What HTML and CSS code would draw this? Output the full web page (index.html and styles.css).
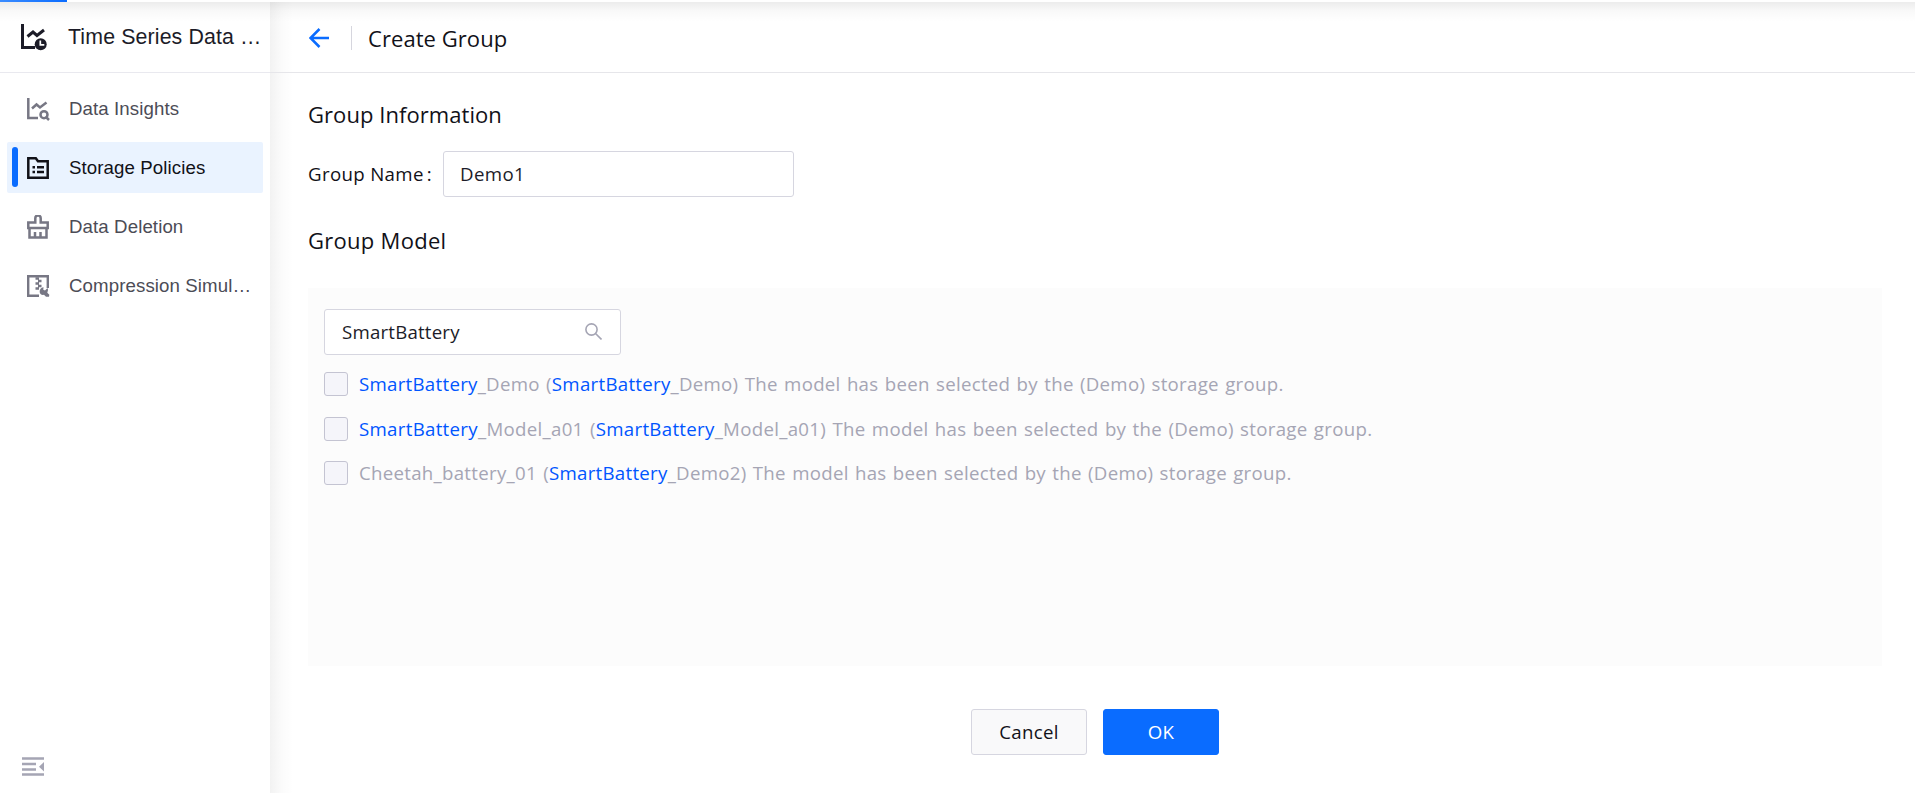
FILE: index.html
```html
<!DOCTYPE html>
<html lang="en">
<head>
<meta charset="utf-8">
<title>Create Group</title>
<link rel="stylesheet" href="styles.css">
</head>
<body>
<div class="progress"><div class="progress-value"></div></div>
<div class="app">
  <aside class="sidebar">
    <div class="brand">
      <svg class="brand-icon" viewBox="0 0 28 28"><path d="M3.500 1v23.500H16" fill="none" stroke="#1c1c28" stroke-width="3"/><path d="M8.500 13.500l5.500-4.500 4 3.500 7-5.500" fill="none" stroke="#1c1c28" stroke-width="3"/><circle cx="21.700" cy="21.200" r="6" fill="#1c1c28"/><path d="M21.300 17.500v4.300h4" fill="none" stroke="#fff" stroke-width="1.700"/></svg>
      <span class="brand-name">Time Series Data …</span>
    </div>
    <nav class="nav">
      <a class="nav-item"><svg class="nav-icon" viewBox="0 0 24 24"><path d="M2.300 1v20H12" fill="none" stroke="currentColor" stroke-width="2.500"/><path d="M6 11.500l4.500-4 3.500 3 6.500-5" fill="none" stroke="currentColor" stroke-width="2.500"/><circle cx="18" cy="17.700" r="3.500" fill="none" stroke="currentColor" stroke-width="2.500"/><path d="M19.500 19.500l3.500 3.500" stroke="currentColor" stroke-width="2.500"/></svg><span>Data Insights</span></a>
      <a class="nav-item active"><svg class="nav-icon" viewBox="0 0 24 24"><path d="M2.300 2.300h7.500l2.200 3h9.700v16.400H2.300z" fill="none" stroke="currentColor" stroke-width="2.500"/><path d="M6.500 11.300H9M11 11.300h7M6.500 16H9M11 16h7" stroke="currentColor" stroke-width="2.400"/></svg><span>Storage Policies</span></a>
      <a class="nav-item"><svg class="nav-icon" viewBox="0 0 24 24"><path d="M9.300 7.500V3.300a2.700 2.700 0 0 1 5.400 0v4.200h7v5.500H2.300V7.500zM3.500 13v9.500h17V13M9 22v-5M14.500 22v-5" fill="none" stroke="currentColor" stroke-width="2.500"/></svg><span>Data Deletion</span></a>
      <a class="nav-item"><svg class="nav-icon" viewBox="0 0 24 24"><path d="M13 21.800H2.200V2.200h19.600V14" fill="none" stroke="currentColor" stroke-width="2.400"/><path d="M9.500 4.500h3.500M12 7h3.500M9.500 9.500h3.500M12 12h3.500M9.500 14.500h3.500" stroke="currentColor" stroke-width="2.500"/><path d="M17.500 13.200a4.300 4.300 0 0 0-3 6.800q1.500 1.300 3.500.8l2 2h3l.3-2-2-2a4.500 4.500 0 0 0 .2-4.800l-2.500 2.500-1.700-.8z" fill="currentColor"/></svg><span>Compression Simul…</span></a>
    </nav>
    <svg class="collapse" viewBox="0 0 22 19"><path d="M0 1.500h22M0 7h14M0 12.500h14M0 17.500h22" stroke="#a5a5b4" stroke-width="2.700"/><path d="M22 5v9.500l-5-4.700z" fill="#a5a5b4"/></svg>
  </aside>
  <main class="main">
    <header class="header">
      <svg class="back" viewBox="0 0 20 20"><path d="M20 10H1.500M10.500 1L1.500 10l9 9" fill="none" stroke="#0a6cff" stroke-width="2.500"/></svg>
      <span class="divider"></span>
      <h1 class="title">Create Group</h1>
    </header>
    <section class="content">
      <h2 class="heading">Group Information</h2>
      <div class="field"><label class="label" for="name">Group Name<span class="colon">:</span></label><input class="input" id="name" value="Demo1"></div>
      <h2 class="heading model-heading">Group Model</h2>
      <div class="panel">
        <div class="search"><span>SmartBattery</span><svg class="search-icon" viewBox="0 0 17 17"><circle cx="6.500" cy="6.500" r="5.600" fill="none" stroke="#a5a5b4" stroke-width="1.600"/><path d="M10.500 10.500l6 6" stroke="#a5a5b4" stroke-width="1.600"/></svg></div>
        <label class="option"><span class="check"></span><span class="option-text"><b>SmartBattery</b>_Demo (<b>SmartBattery</b>_Demo) The model has been selected by the (Demo) storage group.</span></label>
        <label class="option"><span class="check"></span><span class="option-text wide"><b>SmartBattery</b>_Model_a01 (<b>SmartBattery</b>_Model_a01) The model has been selected by the (Demo) storage group.</span></label>
        <label class="option"><span class="check"></span><span class="option-text">Cheetah_battery_01 (<b>SmartBattery</b>_Demo2) The model has been selected by the (Demo) storage group.</span></label>
      </div>
      <div class="actions"><button class="btn">Cancel</button><button class="btn primary">OK</button></div>
    </section>
  </main>
</div>
</body>
</html>
```
FILE: styles.css
```css
* { box-sizing: border-box; }
body { margin: 0; height: 793px; overflow: hidden; background: #fff; color: #111118; font-family: "Open Sans", "Noto Sans", sans-serif; font-size: 18.67px; letter-spacing: .27px; }
.progress { height: 2px; background: #fff; }
.progress-value { width: 67px; height: 2px; background: linear-gradient(90deg, #3b8cff, #0a6cff); }
.app { position: relative; display: flex; height: 791px; }
.app::before { content: ""; position: absolute; inset: 0 0 auto; height: 20px; background: linear-gradient(rgba(0,0,0,.075), rgba(0,0,0,.025) 45%, transparent); z-index: 2; }
.sidebar { width: 270px; flex: none; display: flex; flex-direction: column; font-family: "Liberation Sans", Arial, sans-serif; letter-spacing: .1px; background: #fff; }
.brand { display: flex; align-items: center; height: 71px; padding-left: 19px; border-bottom: 1px solid #e9e9ef; }
.brand-icon { width: 28px; height: 28px; margin-right: 21px; }
.brand-name { font-size: 21.33px; color: #1c1c28; white-space: nowrap; line-height: 30px; letter-spacing: .13px; }
.nav { display: flex; flex-direction: column; gap: 8px; padding: 10px 7px 0; }
.nav-item { display: flex; align-items: center; height: 51px; padding-left: 19px; border-radius: 2px; color: #4c4c56; white-space: nowrap; }
.nav-item.active { position: relative; background: #eaf3ff; color: #111118; }
.nav-item.active::before { content: ""; position: absolute; left: 5px; top: 5px; width: 6px; height: 40px; border-radius: 3px; background: #0a6cff; }
.nav-icon { width: 24px; height: 24px; margin-right: 19px; color: #777784; }
.active .nav-icon { color: #111118; }
.collapse { width: 22px; height: 19px; margin: auto 0 17px 22px; }
.main { flex: 1; min-width: 0; background: linear-gradient(90deg, rgba(0,0,0,.05), rgba(0,0,0,.015) 12px, transparent 23px); }
.header { display: flex; align-items: center; height: 71px; padding: 1px 0 0 39px; border-bottom: 1px solid #e6e6ea; }
.back { width: 20px; height: 20px; }
.divider { width: 1px; height: 24px; margin: 0 16px 0 22px; background: #d6d6de; }
.title, .heading { margin: 0; font-size: 22px; font-weight: 400; line-height: 28px; letter-spacing: .06px; white-space: nowrap; }
.content { padding: 27px 33px 0 38px; }
.field { display: flex; align-items: center; height: 46px; margin-top: 23px; }
.label { width: 135px; padding-bottom: 2px; letter-spacing: .35px; white-space: nowrap; }
.colon { margin-left: 3px; }
.input { width: 351px; height: 46px; padding: 0 16px 2px; border: 1px solid #d6d6e0; border-radius: 3px; font: inherit; letter-spacing: .4px; color: #1c1c28; }
.model-heading { margin-top: 29px; letter-spacing: .28px; }
.panel { height: 378px; margin-top: 34px; padding: 21px 16px; background: #fcfcfc; }
.search { display: flex; align-items: center; justify-content: space-between; width: 297px; height: 46px; margin-bottom: 7px; padding: 0 18px 2px 17px; border: 1px solid #d6d6e0; border-radius: 3px; background: #fff; color: #1c1c28; letter-spacing: .2px; }
.search-icon { width: 17px; height: 17px; }
.option { display: flex; align-items: center; height: 44.500px; gap: 11px; white-space: nowrap; word-spacing: 1.2px; color: #a5a5b4; }
.option-text { padding-bottom: 1px; letter-spacing: .28px; }
.option-text.wide { letter-spacing: .3px; }
.check { width: 24px; height: 24px; border: 1px solid #c4c4d2; border-radius: 3px; background: #f5f5fa; }
.option b { font-weight: 400; color: #0055ff; }
.actions { display: flex; justify-content: center; gap: 16px; margin-top: 43px; }
.btn { width: 116px; height: 46px; border: 1px solid #d6d6e0; border-radius: 3px; background: #f9f9fa; color: #111118; font: inherit; letter-spacing: inherit; padding: 0 0 2px; }
.btn.primary { border-color: #0a6cff; background: #0a6cff; color: #fff; }
```
